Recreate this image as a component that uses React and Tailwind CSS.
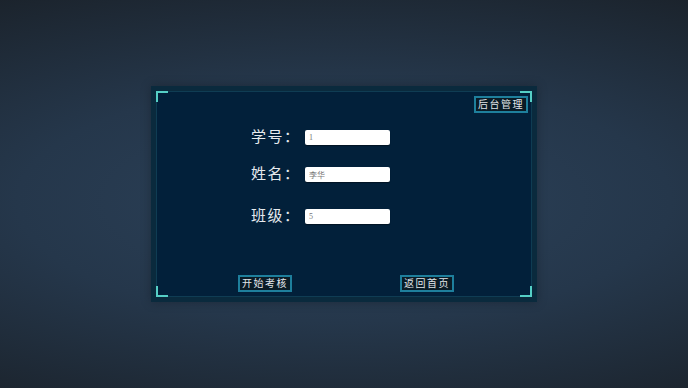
import React from "react";

const cjk = { fontFamily: '"Liberation Serif", "Noto Sans CJK SC", serif' };

function Corner({ pos }) {
  // cyan bracket on each corner of the frame
  const map = {
    tl: "-left-[1px] -top-[1px] border-l-2 border-t-2",
    tr: "-right-[1px] -top-[1px] border-r-2 border-t-2",
    bl: "-left-[1px] -bottom-[1px] border-l-2 border-b-2",
    br: "-right-[1px] -bottom-[1px] border-r-2 border-b-2",
  };
  return (
    <span
      className={`absolute w-[12px] h-[11px] border-[#55cfc6] ${map[pos]}`}
    />
  );
}

function Field({ label, value, className }) {
  return (
    <div className={`flex items-center h-[15px] ${className}`}>
      <span
        className="w-[54px] shrink-0 whitespace-nowrap text-[15px] leading-none text-[#e6eaee] tracking-[1.5px]"
        style={cjk}
      >
        {label}
      </span>
      <input
        readOnly
        value={value}
        className="w-[85px] h-[15px] bg-white rounded-[2px] px-[4px] text-[8px] text-[#777] outline-none shadow-[0_1px_1px_rgba(0,0,0,0.4)]"
        style={cjk}
      />
    </div>
  );
}

function FrameButton({ children }) {
  return (
    <button
      className="w-[54px] h-[17px] border-2 border-[#1e7f9c] bg-[#0a1b26] text-[10px] leading-none text-[#e2e6ea] tracking-[1.5px] whitespace-nowrap"
      style={cjk}
    >
      {children}
    </button>
  );
}

export default function App() {
  return (
    <div className="w-[688px] h-[388px] flex items-center justify-center bg-[radial-gradient(ellipse_95%_62%_at_50%_52%,#2c425a_0%,#25374b_50%,#1b232c_100%)]">
      <div className="w-[386px] h-[216px] bg-[#0a2a3d] p-[5px] shadow-[0_0_10px_rgba(0,0,0,0.25)]">
        <div className="relative h-full border border-[#0f3c53] bg-[#02203a] flex flex-col">
          <Corner pos="tl" />
          <Corner pos="tr" />
          <Corner pos="bl" />
          <Corner pos="br" />

          {/* top */}
          <div className="flex justify-end pt-[4px] pr-[3px]">
            <FrameButton>后台管理</FrameButton>
          </div>

          {/* form */}
          <div className="pl-[94px] flex flex-col">
            <Field label="学号：" value="1" className="mt-[17px]" />
            <Field label="姓名：" value="李华" className="mt-[22px]" />
            <Field label="班级：" value="5" className="mt-[27px]" />
          </div>

          <div className="flex-1" />

          {/* bottom */}
          <div className="flex pl-[81px] gap-[108px] pb-[4px]">
            <FrameButton>开始考核</FrameButton>
            <FrameButton>返回首页</FrameButton>
          </div>
        </div>
      </div>
    </div>
  );
}
